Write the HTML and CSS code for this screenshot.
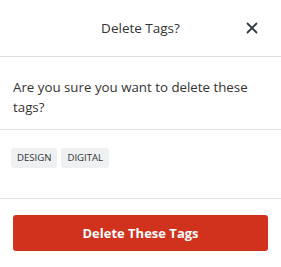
FILE: index.html
```html
<!DOCTYPE html>
<html lang="en">
<head>
    <meta charset="UTF-8">
    <meta name="viewport" content="width=device-width, initial-scale=1.0">
    <title>Delete Tags?</title>
    <link rel="stylesheet" href="styles.css">
</head>
<body>
  <div class="dialog">
      <div class="dialog-header">
          <h2 class="titulo">Delete Tags?</h2>
          <button class="close" aria-label="Close">
              <svg width="12" height="12" viewBox="0 0 12 12"><path d="M1.5 1.5 L10.5 10.5 M10.5 1.5 L1.5 10.5" stroke="#333a42" stroke-width="1.8" stroke-linecap="round"/></svg>
          </button>
      </div>
      <div class="dialog-body">
          <p class="mensagem">Are you sure you want to delete these tags?</p>
      </div>
      <div class="tags">
          <span class="tag">DESIGN</span>
          <span class="tag">DIGITAL</span>
      </div>
      <div class="dialog-footer">
          <button class="btn-delete">Delete These Tags</button>
      </div>
  </div>
</body>
</html>
```

FILE: styles.css
```css
body { font-family: "Open Sans", Arial, sans-serif; background-color: #fff; color: #333; margin: 0; padding: 0; }
.dialog { width: 281px; }
.dialog-header { height: 56px; display: grid; grid-template-columns: 1fr auto 1fr; align-items: center; padding: 0 19px 0 0; border-bottom: 1px solid #dcdfe4; }
.titulo { grid-column: 2; font-size: 13.5px; font-weight: 500; color: #333; margin: 0; padding-left: 19px; }
.close { grid-column: 3; justify-self: end; background: none; border: 0; padding: 4px; cursor: pointer; display: flex; }
.dialog-body { padding: 20px 13px 12px; border-bottom: 1px solid #dcdfe4; }
.mensagem { font-size: 13.3px; line-height: 20px; color: #333; margin: 0; }
.tags { display: flex; gap: 4px; padding: 18px 11px 30px; border-bottom: 1px solid #dcdfe4; }
.tag { background-color: #eef0f2; border-radius: 3px; font-size: 9.6px; color: #333; height: 20px; line-height: 20px; padding: 0 6px; }
.dialog-footer { padding: 16px 13px; }
.btn-delete { width: 100%; height: 36px; background-color: #d0321e; color: #fff; border: 0; border-radius: 3px; font-family: inherit; font-size: 13px; font-weight: 700; cursor: pointer; }
```
